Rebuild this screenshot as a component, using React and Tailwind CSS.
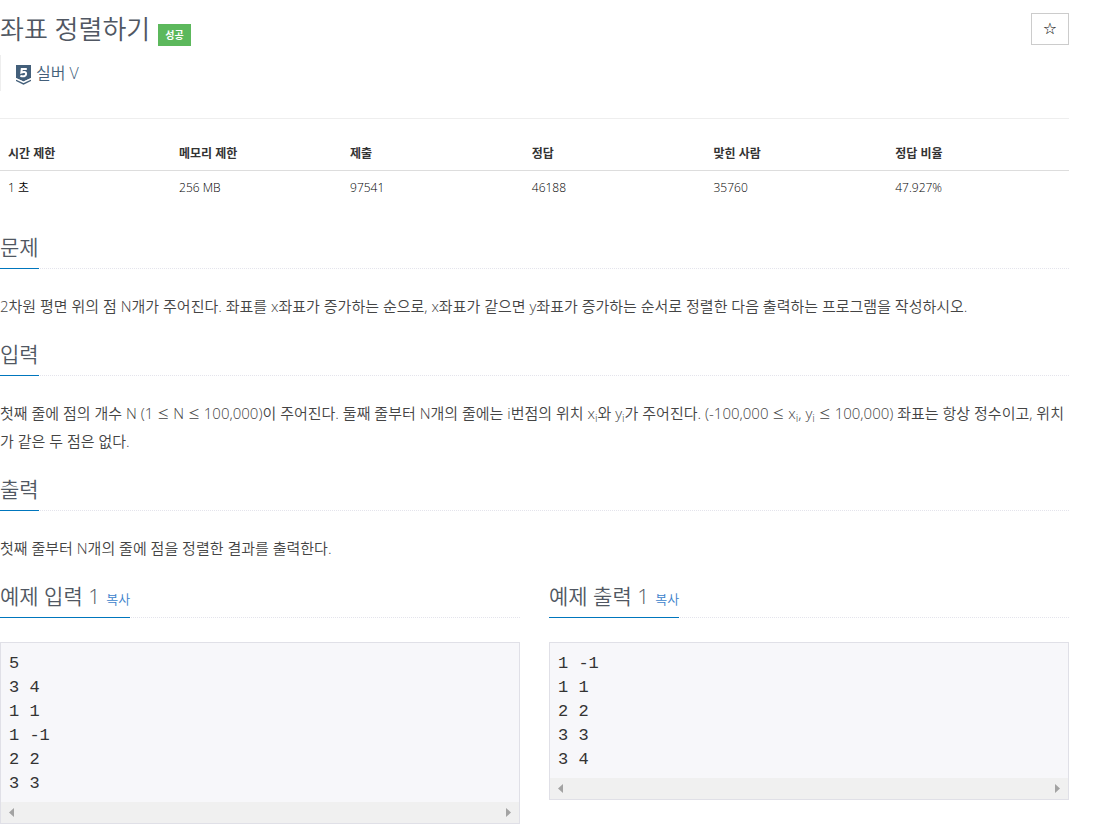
const STATS = [
  ['시간 제한', '1 초', 'w-[16%]'],
  ['메모리 제한', '256 MB', 'w-[16%]'],
  ['제출', '97541', 'w-[17%]'],
  ['정답', '46188', 'w-[17%]'],
  ['맞힌 사람', '35760', 'w-[17%]'],
  ['정답 비율', '47.927%', 'w-[17%]'],
];

function Headline({ children }) {
  return (
    <div className="flex border-b border-dotted border-[#e4e4ec]">
      <h2 className="-mb-px flex items-baseline gap-[6px] border-b border-[#0076bd] pb-2 text-[21px] leading-[26px] text-[#505762]">
        {children}
      </h2>
    </div>
  );
}

function Section({ title, children }) {
  return (
    <section className="mb-[21px]">
      <Headline>{title}</Headline>
      <p className="mt-[23px] text-[15px] leading-7 text-[#444]">{children}</p>
    </section>
  );
}

function Leq() {
  return <span className="font-['Noto_Sans_CJK_KR',sans-serif] text-[12px] leading-none">≤</span>;
}

function TierIcon() {
  return (
    <svg className="mt-1 h-5 w-[15px]" viewBox="0 0 15 20" aria-hidden="true">
      <path fill="#435f7a" d="M0 0h15v13L7.5 16.4 0 13z" />
      <path fill="none" stroke="#fff" strokeWidth="0.9" d="M0 13.6l7.5 3.3L15 13.6" />
      <path fill="none" stroke="#435f7a" strokeWidth="1.4" d="M0 15.3l7.5 3.6L15 15.3" />
      <path
        fill="none"
        stroke="#fff"
        strokeWidth="2.1"
        d="M10.8 4H5.8L5.4 7.4C8 6.5 10.2 7 10.1 9c-.1 2.4-3 2.8-5.7 1.7"
      />
    </svg>
  );
}

function Sample({ title, data }) {
  return (
    <section className="min-w-0">
      <Headline>
        <span>{title}</span>
        <button type="button" className="text-[13px] leading-none text-[#3b7fcb]">복사</button>
      </Headline>
      <div className="mt-6 border border-[#e0e0e7] bg-[#f7f7fa]">
        <pre className="px-2 pt-[9px] pb-[6px] font-['Liberation_Mono',monospace] text-[17px] leading-6 text-[#333]">{data}</pre>
        <div className="flex h-[21px] items-center justify-between bg-[#f0f0f0] px-2">
          <button type="button" aria-label="왼쪽으로 스크롤">
            <svg className="h-[9px] w-[5px]" viewBox="0 0 5 9"><path fill="#a3a3a3" d="M5 0v9L0 4.5z" /></svg>
          </button>
          <button type="button" aria-label="오른쪽으로 스크롤">
            <svg className="h-[9px] w-[5px]" viewBox="0 0 5 9"><path fill="#a3a3a3" d="M0 0v9l5-4.5z" /></svg>
          </button>
        </div>
      </div>
    </section>
  );
}

export default function App() {
  return (
    <main className="bg-white pr-[26px] pb-4 font-['Open_Sans','Noto_Sans_CJK_KR',sans-serif] font-[350] text-[#333]">
      <header className="flex items-start justify-between pt-[13px]">
        <div>
          <div className="flex items-start gap-2">
            <h1 className="text-[26px] leading-8 font-[350] text-[#505762]">좌표 정렬하기</h1>
            <span className="mt-[11px] bg-[#5cb85c] px-[7px] text-[10px] leading-[22px] font-bold text-white">성공</span>
          </div>
          <div className="mt-[9px] flex h-9 items-center gap-[5px] border-l border-[#eee] pl-[15px] text-[16px] text-[#435f7a]">
            <TierIcon />
            <span>실버 V</span>
          </div>
        </div>
        <button
          type="button"
          aria-label="즐겨찾기"
          className="flex h-8 w-[38px] items-center justify-center border border-[#ccc] font-['DejaVu_Sans',sans-serif] text-[16px] leading-none font-bold text-black"
        >
          ☆
        </button>
      </header>
      <hr className="mt-[27px] border-[#eee]" />
      <table className="mt-[18px] mb-[30px] w-full table-fixed text-left text-[12px] leading-[17px]">
        <thead>
          <tr className="border-b border-[#ddd]">
            {STATS.map(([label, , width]) => (
              <th key={label} scope="col" className={`${width} p-2 font-bold`}>{label}</th>
            ))}
          </tr>
        </thead>
        <tbody>
          <tr>
            {STATS.map(([label, value]) => (
              <td key={label} className="p-2 text-black">{value}</td>
            ))}
          </tr>
        </tbody>
      </table>
      <Section title="문제">
        2차원 평면 위의 점 N개가 주어진다. 좌표를 x좌표가 증가하는 순으로, x좌표가 같으면 y좌표가 증가하는 순서로 정렬한 다음 출력하는 프로그램을 작성하시오.
      </Section>
      <Section title="입력">
        첫째 줄에 점의 개수 N (1 <Leq /> N <Leq /> 100,000)이 주어진다. 둘째 줄부터 N개의 줄에는 i번점의 위치 x<sub>i</sub>와 y<sub>i</sub>가 주어진다. (-100,000 <Leq /> x<sub>i</sub>, y<sub>i</sub> <Leq /> 100,000) 좌표는 항상 정수이고, 위치가 같은 두 점은 없다.
      </Section>
      <Section title="출력">
        첫째 줄부터 N개의 줄에 점을 정렬한 결과를 출력한다.
      </Section>
      <div className="grid grid-cols-2 items-start gap-[29px]">
        <Sample title="예제 입력 1" data={'5\n3 4\n1 1\n1 -1\n2 2\n3 3'} />
        <Sample title="예제 출력 1" data={'1 -1\n1 1\n2 2\n3 3\n3 4'} />
      </div>
    </main>
  );
}
